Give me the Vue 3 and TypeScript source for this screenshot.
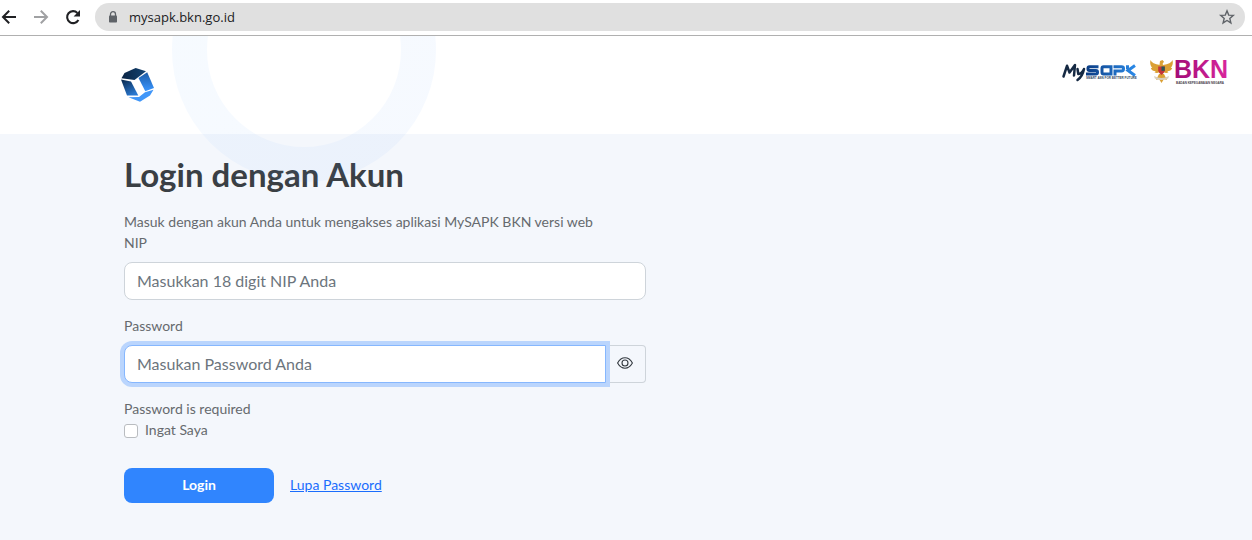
<script setup lang="ts">
import { ref } from 'vue'

const address = ref('mysapk.bkn.go.id')
const nip = ref('')
const password = ref('')
const remember = ref(false)
const showPassword = ref(false)
</script>

<template>
  <div class="window">
    <div class="toolbar">
      <button class="nav back" type="button" aria-label="Back">
        <svg viewBox="0 0 16 16" width="16" height="16"><path d="M15 8H2.4M8.2 1.8L2 8l6.200 6.200" fill="none" stroke="currentColor" stroke-width="2" /></svg>
      </button>
      <button class="nav forward" type="button" aria-label="Forward">
        <svg viewBox="0 0 16 16" width="16" height="16"><path d="M1 8h12.600M7.800 1.800L14 8l-6.200 6.200" fill="none" stroke="currentColor" stroke-width="2" /></svg>
      </button>
      <button class="nav" type="button" aria-label="Reload">
        <svg viewBox="0 0 16 16" width="16" height="16">
          <path d="M13.400 11A6 6 0 1 1 12.400 3.900" fill="none" stroke="currentColor" stroke-width="2.100" />
          <path d="M15 1v6.400H8.600z" fill="currentColor" />
        </svg>
      </button>
      <div class="omnibox">
        <svg class="lock" viewBox="0 0 10 12" width="10" height="12">
          <path d="M2.500 5V3.200a2.500 2.500 0 0 1 5 0V5" fill="none" stroke="#5f6368" stroke-width="1.300" />
          <rect x="1" y="4.500" width="8" height="7" rx="0.800" fill="#5f6368" />
        </svg>
        <input v-model="address" class="address" type="text" aria-label="Address" />
        <button class="star" type="button" aria-label="Bookmark this page">
          <svg viewBox="0 0 16 16" width="16" height="16"><path d="M8 1.800l1.700 4.300 4.600.300-3.500 3 1.100 4.500L8 11.500l-3.900 2.400 1.100-4.500-3.500-3 4.600-.300z" fill="none" stroke="#5f6368" stroke-width="1.400" /></svg>
        </button>
      </div>
    </div>

    <div class="page">
      <svg class="ring" viewBox="0 0 264 146" width="264" height="146" aria-hidden="true">
        <defs>
          <linearGradient id="ringFill" x1="0" y1="0" x2="1" y2="1">
            <stop offset="0" stop-color="#4aa8ff" />
            <stop offset="1" stop-color="#4a8df8" />
          </linearGradient>
        </defs>
        <circle cx="132" cy="14" r="114.500" fill="none" stroke="url(#ringFill)" stroke-width="35" opacity="0.05" />
      </svg>

      <header class="site-header">
        <a class="brand" href="#" aria-label="MySAPK">
          <svg viewBox="0 0 36 36" width="36" height="36">
            <defs>
              <linearGradient id="cubeTop" x1="0" y1="0" x2="1" y2="0"><stop offset="0" stop-color="#0a2342" /><stop offset="1" stop-color="#124373" /></linearGradient>
              <linearGradient id="cubeLeft" x1="0" y1="0" x2="0.600" y2="1"><stop offset="0" stop-color="#07264a" /><stop offset="1" stop-color="#2a78d0" /></linearGradient>
              <linearGradient id="cubeRight" x1="0" y1="0" x2="0" y2="1"><stop offset="0" stop-color="#1b5ca8" /><stop offset="1" stop-color="#3a96ff" /></linearGradient>
            </defs>
            <path d="M2.500 11.300 5.500 6 16.700 1 27 4.300 15.500 13z" fill="url(#cubeTop)" />
            <path d="M2 12.500 12 14.500 19.300 28.500 8 28.500z" fill="url(#cubeLeft)" />
            <path d="M19.500 11 28.200 5.300 35 21 26.300 24.200z" fill="url(#cubeRight)" />
            <path d="M9.500 30.200 20 30 26 25.200 34.500 22.800 31 28.500 21 34.800z" fill="#4096f8" />
          </svg>
        </a>

        <div class="partners">
          <svg class="mysapk" viewBox="0 0 76 24" width="76" height="24" role="img" aria-label="MySAPK">
            <defs>
              <linearGradient id="sapk" gradientUnits="userSpaceOnUse" x1="25" y1="0" x2="75" y2="0"><stop offset="0" stop-color="#0b3c83" /><stop offset="1" stop-color="#2b8bea" /></linearGradient>
            </defs>
            <path d="M2.500 15.500 6 4.800 8.500 11.500 14 4 13 14.500M16.500 8 17.300 13Q20 13.500 23 8M23 8Q21.500 15.500 16.500 19" fill="none" stroke="#152943" stroke-width="2.500" stroke-linejoin="round" stroke-linecap="round" />
            <g fill="none" stroke="url(#sapk)" stroke-width="3">
              <path d="M37.500 5.800H28.500Q27 5.800 27 7.300v.700q0 1.500 1.500 1.500h6.500q1.500 0 1.500 1.500v.500q0 1.500-1.500 1.500H25" />
              <path d="M50 14.500V5.800H42.500Q41 5.800 41 7.500v3.800q0 1.700 1.700 1.700H50" />
              <path d="M52.500 5.800h8q2 0 2 1.700v.600q0 1.900-2 1.900H54v4.500" />
              <path d="M74 4.600 67 9.500l7 5M66.500 4.300v4" />
            </g>
            <text class="tagline" x="25" y="18">SMART ASN FOR BETTER FUTURE</text>
          </svg>

          <svg class="bkn" viewBox="0 0 82 28" width="82" height="28" role="img" aria-label="BKN">
            <defs>
              <linearGradient id="bknFill" x1="0" y1="0" x2="1" y2="0"><stop offset="0" stop-color="#a10c77" /><stop offset="1" stop-color="#d9259d" /></linearGradient>
            </defs>
            <g fill="#dba034">
              <path d="M11 8Q3 7 1.500 3Q.200 8 3.300 10.800L1.800 10.900Q3 14 6.800 14.300L5.500 15.300Q8 17 10.500 15z" />
              <path d="M14 8Q22 7 23.500 3Q24.800 8 21.700 10.800L23.200 10.900Q22 14 18.200 14.300L19.500 15.300Q17 17 14.500 15z" />
              <path d="M10.500 8 11 4 13.500 3 15 4.800 13.700 6.500 15 14.500 12.500 18 9.500 14z" />
              <path d="M10 17h5l3 6-3-1-2.500 4L10 22l-3 1z" />
            </g>
            <path d="M5 19Q12.500 23 20 19L19.200 21.500Q12.500 24.500 5.800 21.500z" fill="#d9cfbd" />
            <path d="M9.200 9.500h6.600v4.300q-1 3.200-3.300 4.200-2.300-1-3.300-4.200z" fill="#c53439" />
            <path d="M12.500 9.500h3.300v4.300h-3.300z" fill="#2d5653" />
            <text class="bkn-name" x="25" y="21">BKN</text>
            <text class="bkn-caption" x="27" y="27">BADAN KEPEGAWAIAN NEGARA</text>
          </svg>
        </div>
      </header>

      <main class="content">
        <form class="login" @submit.prevent>
          <h1>Login dengan Akun</h1>
          <p class="line">Masuk dengan akun Anda untuk mengakses aplikasi MySAPK BKN versi web</p>
          <label class="line" for="nip">NIP</label>
          <input id="nip" v-model="nip" class="field" type="text" placeholder="Masukkan 18 digit NIP Anda" />

          <label class="line password-label" for="password">Password</label>
          <div class="group">
            <input id="password" v-model="password" class="field active" :type="showPassword ? 'text' : 'password'" placeholder="Masukan Password Anda" />
            <button class="reveal" type="button" aria-label="Show password" @click="showPassword = !showPassword">
              <svg viewBox="0 0 16 16" width="16" height="16" fill="none" stroke="#343a40" stroke-width="1.100">
                <path d="M.600 8Q3.500 2.800 8 2.800T15.400 8Q12.500 13.200 8 13.200T.600 8z" />
                <circle cx="8" cy="8" r="3" />
              </svg>
            </button>
          </div>

          <p class="line error">Password is required</p>
          <label class="line remember"><input v-model="remember" type="checkbox" />Ingat Saya</label>

          <div class="actions">
            <button class="submit" type="submit">Login</button>
            <a href="#">Lupa Password</a>
          </div>
        </form>
      </main>
    </div>
  </div>
</template>

<style>
body {
  margin: 0;
  background: #f4f7fc;
}
</style>

<style scoped>
.window {
  min-height: 100vh;
  display: flex;
  flex-direction: column;
  font-family: Lato, "Liberation Sans", sans-serif;
  color: #666a6e;
}
.window * {
  box-sizing: border-box;
}
button {
  padding: 0;
  border: 0;
  background: none;
  font: inherit;
  cursor: pointer;
}
svg {
  display: block;
  overflow: visible;
}
.ring {
  overflow: hidden;
}
.toolbar {
  display: flex;
  align-items: center;
  gap: 16px;
  height: 36px;
  padding: 0 7px 2px 1px;
  border-bottom: 1px solid #b0b0b0;
  background: #fff;
}
.nav {
  color: #202124;
}
.nav.forward {
  color: #a0a1a3;
}
.omnibox {
  flex: 1;
  display: flex;
  align-items: center;
  height: 28px;
  margin-left: -2px;
  padding: 0 10px 0 13px;
  border-radius: 14px;
  background: #e0e0e0;
}
.address {
  flex: 1;
  min-width: 0;
  margin-left: 11px;
  padding: 0;
  border: 0;
  outline: 0;
  background: none;
  font: 13px "Open Sans", "Noto Sans", sans-serif;
  color: #202124;
}
.page {
  position: relative;
  flex: 1;
  background: #f4f7fc;
}
.ring {
  position: absolute;
  top: 0;
  left: 172px;
  pointer-events: none;
}
.site-header {
  display: flex;
  justify-content: space-between;
  align-items: flex-start;
  height: 98px;
  padding: 21px 21px 0 119px;
  background: #fff;
}
.brand {
  margin-top: 10px;
}
.partners {
  display: flex;
  gap: 12px;
}
.mysapk {
  margin-top: 4px;
}
.tagline {
  font: bold 3px "Liberation Sans", sans-serif;
  fill: #31435c;
}
.bkn-name {
  font: bold 25px "Liberation Sans", sans-serif;
  fill: url(#bknFill);
}
.bkn-caption {
  font: bold 3px "Liberation Sans", sans-serif;
  fill: #494149;
}
.content {
  padding: 20px 24px 37px 124px;
}
.login {
  display: flex;
  flex-direction: column;
  max-width: 522px;
}
h1 {
  margin: 0 0 16px;
  font-size: 33px;
  line-height: 41px;
  font-weight: 700;
  color: #3a3f44;
}
.line {
  margin: 0;
  font-size: 14px;
  line-height: 21px;
}
.field {
  width: 100%;
  height: 38px;
  margin-top: 9px;
  padding: 0 12px 2px;
  border: 1px solid #ced4da;
  border-radius: 8px;
  outline: 0;
  background: #fff;
  font: inherit;
  font-size: 16px;
  color: #495057;
}
.field::placeholder {
  color: #6c757d;
  opacity: 1;
}
.password-label {
  margin-top: 15px;
}
.group {
  display: flex;
  margin-top: 9px;
}
.group .field {
  flex: 1;
  min-width: 0;
  margin: 0;
}
.field.active {
  position: relative;
  border-color: #86b7fe;
  border-radius: 8px 0 0 8px;
  box-shadow: 0 0 0 4px #bad5fd;
}
.reveal {
  display: flex;
  align-items: center;
  justify-content: center;
  width: 40px;
  height: 38px;
  padding: 0 2px 2px 0;
  border: 1px solid #ced4da;
  border-left: 0;
  border-radius: 0 4px 4px 0;
}
.error {
  margin-top: 15px;
}
.remember {
  display: flex;
  align-items: center;
}
.remember input {
  appearance: none;
  width: 14px;
  height: 14px;
  margin: 2px 7px 0 0;
  border: 1px solid #b9bcc0;
  border-radius: 3px;
  background: #fff;
}
.remember input:checked {
  background: #3085fe;
}
.actions {
  display: flex;
  align-items: center;
  gap: 16px;
  margin-top: 28px;
  font-size: 14px;
}
.submit {
  width: 150px;
  height: 35px;
  padding-bottom: 2px;
  border-radius: 8px;
  background: #3085fe;
  color: #fff;
  font-weight: 700;
}
.actions a {
  padding-bottom: 2px;
  color: #1a6dfd;
}
</style>
